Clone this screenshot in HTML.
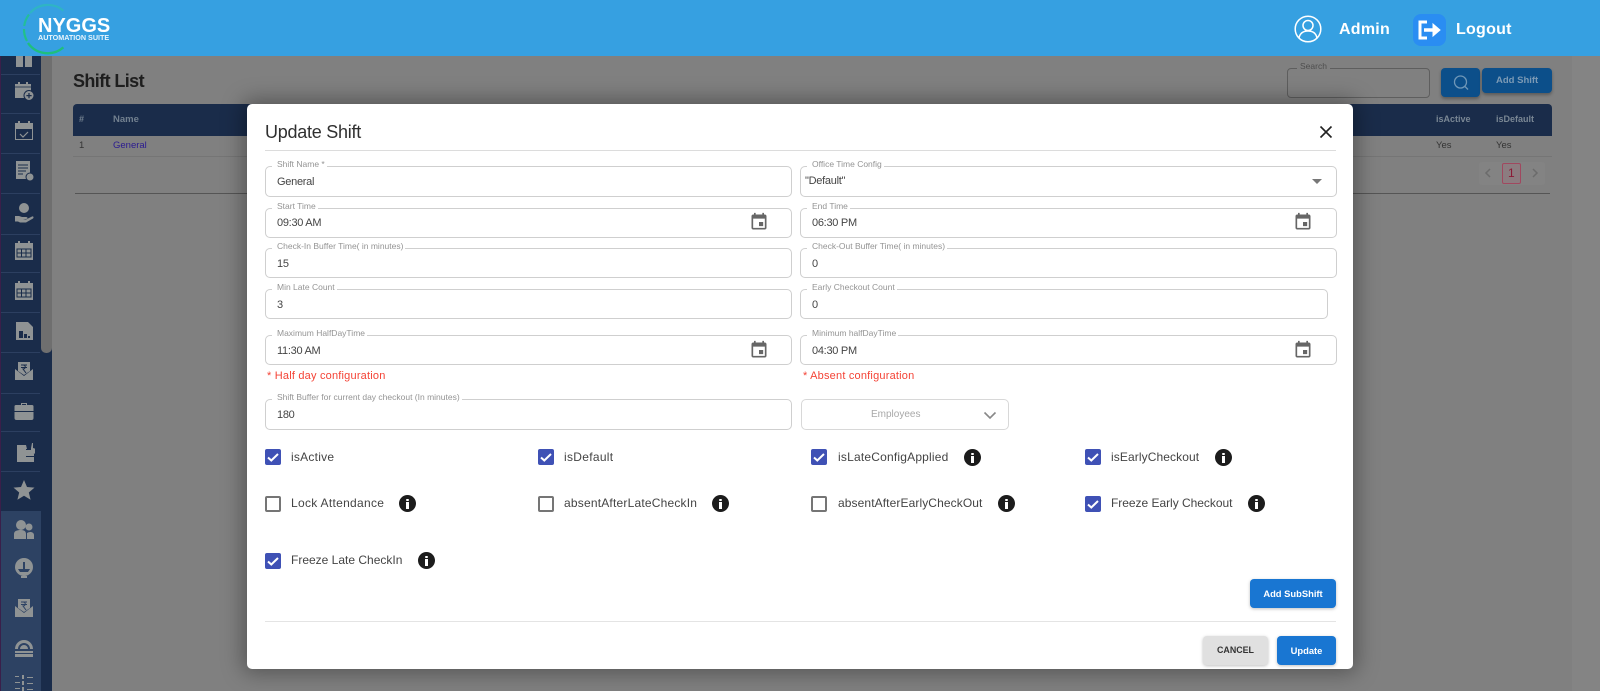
<!DOCTYPE html>
<html><head><meta charset="utf-8"><style>
*{box-sizing:border-box}
html,body{margin:0;padding:0;width:1600px;height:691px;overflow:hidden;background:#808080;font-family:"Liberation Sans",sans-serif}
body{filter:blur(.35px)}
.a{position:absolute}
.t{position:absolute;white-space:nowrap;line-height:1}
.hdr{left:0;top:0;width:1600px;height:56px;background:#36a0e1;z-index:5}
.sb{left:0;top:56px;width:52px;height:635px;background:#1a2c4a}
.sb2{left:1px;top:511px;width:40px;height:180px;background:#2d4263}
.sbs{left:41px;top:56px;width:11px;height:297px;background:#6f6f6f;border-radius:0 0 5px 5px}
.sep{left:1px;width:39px;height:1px;background:#2c3f60}
.ic{position:absolute;left:13px;width:22px;height:22px;fill:#8f9394}
.modal{left:247px;top:104px;width:1106px;height:565px;background:#fff;border-radius:5px;box-shadow:0 0 22px 4px rgba(0,0,0,.35);z-index:3}
.f{position:absolute;border:1px solid #cfcfcf;border-radius:5px;background:#fff;z-index:4}
.l{position:absolute;left:6px;top:-7px;background:#fff;padding:0 2px 0 5px;font-size:8.5px;line-height:9px;color:#949494;white-space:nowrap}
.v{position:absolute;left:11px;font-size:11px;letter-spacing:-.28px;line-height:12px;color:#444;white-space:nowrap}
.cal{position:absolute;width:20px;height:20px;fill:#666;z-index:5}
.cb{position:absolute;width:16px;height:16px;border-radius:2px;z-index:4}
.on{background:#3f51b5}
.off{border:2px solid #757575;background:#fff}
.cb svg{position:absolute;left:0;top:0;width:16px;height:16px}
.lb{position:absolute;font-size:12px;line-height:14px;color:#444;white-space:nowrap;z-index:4}
.i{position:absolute;width:17px;height:17px;border-radius:50%;background:#1c1c1c;z-index:4;color:#fff}
.i:before{content:"";position:absolute;left:7.4px;top:3.5px;width:2.2px;height:2.2px;background:#fff;border-radius:50%}
.i:after{content:"";position:absolute;left:7.4px;top:7px;width:2.2px;height:6.5px;background:#fff}
.btn{position:absolute;border-radius:4px;background:#1976d2;color:#fff;font-size:9.4px;font-weight:bold;text-align:center;box-shadow:0 1px 3px rgba(0,0,0,.25);z-index:4}
.red{position:absolute;font-size:11px;line-height:12px;color:#f44336;z-index:4;white-space:nowrap;letter-spacing:.2px}
</style></head><body>

<!-- underlying page -->
<div class="a" style="left:52px;top:56px;width:1520px;height:156px;background:#808080"></div>
<div class="a" style="left:1572px;top:56px;width:28px;height:635px;background:#848484"></div>
<div class="t" style="left:73px;top:72px;font-size:18px;font-weight:bold;color:#1e1e1e;letter-spacing:-.6px">Shift List</div>
<div class="a" style="left:73px;top:104px;width:1479px;height:32px;background:#1a2c4a;border-radius:4px 4px 0 0"></div>
<div class="t" style="left:79px;top:115px;font-size:9px;font-weight:bold;color:#72808f">#</div>
<div class="t" style="left:113px;top:115px;font-size:9.5px;font-weight:bold;color:#72808f">Name</div>
<div class="t" style="left:1436px;top:115px;font-size:9px;font-weight:bold;color:#7a8794">isActive</div>
<div class="t" style="left:1496px;top:115px;font-size:9px;font-weight:bold;color:#7a8794">isDefault</div>
<div class="t" style="left:79px;top:141px;font-size:9.5px;color:#333">1</div>
<div class="t" style="left:113px;top:141px;font-size:9.5px;color:#2a1a90">General</div>
<div class="t" style="left:1436px;top:141px;font-size:9.5px;color:#333">Yes</div>
<div class="t" style="left:1496px;top:141px;font-size:9.5px;color:#333">Yes</div>
<div class="a" style="left:73px;top:156px;width:1479px;height:1px;background:#757575"></div>
<div class="a" style="left:75px;top:193px;width:1475px;height:1px;background:#555"></div>
<div class="a" style="left:1287px;top:68px;width:143px;height:30px;border:1px solid #5e5e5e;border-radius:4px"></div>
<div class="t" style="left:1297px;top:62px;font-size:8.5px;padding:0 3px;background:#808080;color:#4e4e4e">Search</div>
<div class="a" style="left:1441px;top:68px;width:39px;height:29px;background:#0c4f8a;border-radius:4px;box-shadow:0 2px 3px rgba(0,0,0,.3)">
<svg width="39" height="29" viewBox="0 0 39 29" style="position:absolute;left:0;top:0" fill="none" stroke="#6f97b8" stroke-width="1.3"><circle cx="19.500" cy="14" r="6"/><path d="M24 18.500l3 3"/></svg></div>
<div class="a" style="left:1482px;top:68px;width:70px;height:25px;background:#0c4f8a;border-radius:4px;box-shadow:0 2px 3px rgba(0,0,0,.3)"></div>
<div class="t" style="left:1496px;top:76px;font-size:9.5px;font-weight:bold;color:#7c9ab5">Add Shift</div>
<div class="a" style="left:1479px;top:162px;width:66px;height:23px;background:#838383;border-radius:3px"></div>
<div class="a" style="left:1502px;top:163px;width:19px;height:21px;border:1px solid #a0485f;border-radius:2px;background:#8c7c80"></div>
<div class="t" style="left:1508px;top:167px;font-size:12px;color:#8b1a35">1</div>
<svg class="a" style="left:1482px;top:165px" width="60" height="16" viewBox="0 0 60 16" fill="none" stroke="#6b6b6b" stroke-width="1.500"><path d="M8 4l-4 4 4 4M51 4l4 4-4 4"/></svg>

<!-- sidebar -->
<div class="a sb"></div>
<div class="a sb2"></div>
<div class="a sbs"></div>
<div class="a" style="left:0;top:56px;width:1px;height:635px;background:#3a1f4a"></div>
<div class="a sep" style="top:74px"></div><div class="a sep" style="top:113px"></div><div class="a sep" style="top:153px"></div><div class="a sep" style="top:193px"></div><div class="a sep" style="top:234px"></div><div class="a sep" style="top:272px"></div><div class="a sep" style="top:312px"></div><div class="a sep" style="top:352px"></div><div class="a sep" style="top:393px"></div><div class="a sep" style="top:431px"></div><div class="a sep" style="top:471px"></div>

<svg class="ic" style="top:50px" viewBox="0 0 22 22"><path d="M3 6h7v11H3zM12 6h7v11h-7z"/></svg>
<svg class="ic" style="top:80px" viewBox="0 0 22 22"><path d="M2 4h3V2h2v2h6V2h2v2h3v14H2z"/><path d="M2 7h16" stroke="#1a2c4a" stroke-width=".8"/><circle cx="16" cy="15.500" r="5" stroke="#1a2c4a"/><path d="M15.400 13h1.200v2h2v1.200h-2v2h-1.200v-2h-2V15h2z" fill="#1a2c4a"/></svg>
<svg class="ic" style="top:120px" viewBox="0 0 22 22"><path d="M2 3h3V1h2v2h8V1h2v2h3v5H2z"/><path d="M2.500 8.500h17v11h-17z" fill="none" stroke="#8f9394"/><path d="M7 14l3 3 5-5" fill="none" stroke="#8f9394" stroke-width="1.200"/></svg>
<svg class="ic" style="top:160px" viewBox="0 0 22 22"><path d="M3 1h14v18H3z"/><path d="M5 5h10M5 8h10M5 11h8M5 14h5" stroke="#1a2c4a"/><circle cx="17" cy="17" r="4" stroke="#1a2c4a"/></svg>
<svg class="ic" style="top:202px" viewBox="0 0 22 22"><circle cx="11" cy="6" r="5"/><path d="M2 14h4l3 1h4c2 0 2 2 0 2h-3l3 .5 6-3c1.500-.5 2 1 1 2l-7 4H7l-2-1H2z"/></svg>
<svg class="ic" style="top:240px" viewBox="0 0 22 22"><path d="M2 3h3V1h2v2h8V1h2v2h3v17H2z"/><path d="M4 9h14v8H4zM8.500 9v8M13 9v8M4 13h14" fill="none" stroke="#1a2c4a" stroke-width="1"/></svg>
<svg class="ic" style="top:280px" viewBox="0 0 22 22"><path d="M2 3h3V1h2v2h8V1h2v2h3v17H2z"/><path d="M4 9h14v8H4zM8.500 9v8M13 9v8M4 13h14" fill="none" stroke="#1a2c4a" stroke-width="1"/></svg>
<svg class="ic" style="top:320px" viewBox="0 0 22 22"><path d="M3 2h12l5 5v13H3z"/><path d="M6 11h4v7H6zM11 14h3v4h-3zM15 16h2v2h-2z" fill="#1a2c4a"/></svg>
<svg class="ic" style="top:360px" viewBox="0 0 22 22"><path d="M5 2h12v9l-6 4-6-4zM2 9l9 7 9-7v11H2z"/><path d="M8 5h6M8 7.500h6M10 5c3 0 3 4 0 4l3 4" fill="none" stroke="#1a2c4a"/></svg>
<svg class="ic" style="top:400px" viewBox="0 0 22 22"><path d="M8 3h6v2h5a1.500 1.500 0 0 1 1.500 1.500V11H1.500V6.500A1.500 1.500 0 0 1 3 5h5zm1 1v1h4V4zM1.500 12H20.500v6a2 2 0 0 1-2 2h-15a2 2 0 0 1-2-2z"/></svg>
<svg class="ic" style="top:441px" viewBox="0 0 22 22"><path d="M4 4h9l1 4h-1v1h5v-2l1-5h1v5a3 3 0 0 1 0 6H13v8H4z"/><path d="M9 13h12v2H9zM9 16h12v5H9z"/></svg>
<svg class="ic" style="top:479px" viewBox="0 0 22 22"><path d="M11 1l3 7 7.500.6-5.700 4.900 1.800 7.300L11 16.800 4.400 20.800l1.800-7.300L.5 8.600 8 8z"/></svg>
<svg class="ic" style="top:519px" viewBox="0 0 22 22"><circle cx="8" cy="6" r="5"/><circle cx="16" cy="8" r="3.500"/><path d="M1 20v-5c0-3 3-4 7-4s5 2 5 4v5zM14 20v-6c3-2 7-1 7 2v4z"/></svg>
<svg class="ic" style="top:557px" viewBox="0 0 22 22"><circle cx="11" cy="10" r="9"/><path d="M5 12h12l-2 3H7zM10 5h2v7h-2z" fill="#2d4263"/><path d="M8 19h6v2H8z"/></svg>
<svg class="ic" style="top:597px" viewBox="0 0 22 22"><path d="M5 2h12v9l-6 4-6-4zM2 9l9 7 9-7v11H2z"/><path d="M8 5h6M8 7.500h6M10 5c3 0 3 4 0 4l3 4" fill="none" stroke="#2d4263"/></svg>
<svg class="ic" style="top:636px" viewBox="0 0 22 22"><path d="M2 13a9 9 0 0 1 18 0h-3a6 6 0 0 0-12 0zM7 13a4 4 0 0 1 8 0zM2 15h18v2H2zM2 18h18v3H2z"/></svg>
<svg class="ic" style="top:674px" viewBox="0 0 22 22"><path d="M2 2h4v1H2zM9 1h2v4H9zM14 3h6v1h-6zM2 8h5v1H2zM9 7h2v4H9zM14 9h6v1h-6zM2 14h5v1H2zM9 13h2v4H9zM14 15h6v1h-6z"/></svg>

<!-- header -->
<div class="a hdr">
<svg class="a" style="left:0;top:0" width="80" height="56" viewBox="0 0 80 56" fill="none"><path d="M63.400 10.600A24 24 0 0 0 30 13" stroke="#2fb4c4" stroke-width="2.200"/><path d="M29 14.500A24 24 0 0 0 24.200 26" stroke="#24bd9a" stroke-width="2.200"/><path d="M24 29A24 24 0 0 0 27 41" stroke="#21c08a" stroke-width="2.200"/><path d="M28 43A24 24 0 0 0 63.400 47.400" stroke="#1fbf7c" stroke-width="2.400"/></svg>
<div class="t" style="left:38px;top:16px;font-size:20px;font-weight:bold;color:#fff">NYGGS</div>
<div class="t" style="left:38px;top:34px;font-size:7.200px;font-weight:bold;color:#e8f4fc">AUTOMATION SUITE</div>
<svg class="a" style="left:1294px;top:15px" width="28" height="28" viewBox="0 0 28 28" fill="none" stroke="#fff" stroke-width="1.500"><circle cx="14" cy="14" r="12.800"/><circle cx="14" cy="10.500" r="5"/><path d="M5 23c1-5 4-7 9-7s8 2 9 7"/></svg>
<div class="t" style="left:1339px;top:22px;font-size:16px;font-weight:bold;color:#fff;letter-spacing:.25px">Admin</div>
<div class="a" style="left:1413px;top:14px;width:33px;height:32px;background:#2a8df2;border-radius:8px"></div>
<svg class="a" style="left:1413px;top:14px" width="33" height="32" viewBox="0 0 33 32" fill="none" stroke="#fff"><path d="M14 8H7v16h7" stroke-width="3"/><path d="M11 16h12" stroke-width="3.500"/><path d="M20 10l7 6-7 6z" fill="#fff" stroke-width="1"/></svg>
<div class="t" style="left:1456px;top:22px;font-size:16px;font-weight:bold;color:#fff;letter-spacing:.25px">Logout</div>
</div>

<!-- modal -->
<div class="a modal"></div>
<div class="t" style="left:265px;top:123px;font-size:18px;color:#303030;z-index:4;letter-spacing:-.25px">Update Shift</div>
<svg class="a" style="left:1319px;top:125px;z-index:4" width="14" height="14" viewBox="0 0 14 14" stroke="#222" stroke-width="1.600"><path d="M1.500 1.500l11 11M12.500 1.500l-11 11"/></svg>
<div class="a" style="left:265px;top:150px;width:1071px;height:1px;background:#dcdcdc;z-index:4"></div>

<div class="f" style="left:265px;top:166px;width:527px;height:31px"><span class="l">Shift Name *</span><span class="v" style="top:9px">General</span></div>
<div class="f" style="left:800px;top:166px;width:537px;height:31px"><span class="l">Office Time Config</span><span class="v" style="left:4px;top:8px">"Default"</span><svg class="a" style="left:511px;top:12px" width="10" height="5" viewBox="0 0 10 5"><path d="M0 0h10L5 5z" fill="#777"/></svg></div>

<div class="f" style="left:265px;top:208px;width:527px;height:30px"><span class="l">Start Time</span><span class="v" style="top:8px">09:30 AM</span></div>
<svg class="cal" style="left:749px;top:212px" viewBox="0 0 24 24"><path d="M17 12h-5v5h5v-5zM16 1v2H8V1H6v2H5c-1.110 0-1.990.9-1.990 2L3 19c0 1.100.89 2 2 2h14c1.100 0 2-.9 2-2V5c0-1.100-.9-2-2-2h-1V1h-2zm3 18H5V8h14v11z"/></svg>
<div class="f" style="left:800px;top:208px;width:537px;height:30px"><span class="l">End Time</span><span class="v" style="top:8px">06:30 PM</span></div>
<svg class="cal" style="left:1293px;top:212px" viewBox="0 0 24 24"><path d="M17 12h-5v5h5v-5zM16 1v2H8V1H6v2H5c-1.110 0-1.990.9-1.990 2L3 19c0 1.100.89 2 2 2h14c1.100 0 2-.9 2-2V5c0-1.100-.9-2-2-2h-1V1h-2zm3 18H5V8h14v11z"/></svg>

<div class="f" style="left:265px;top:248px;width:527px;height:30px"><span class="l">Check-In Buffer Time( in minutes)</span><span class="v" style="top:9px">15</span></div>
<div class="f" style="left:800px;top:248px;width:537px;height:30px"><span class="l">Check-Out Buffer Time( in minutes)</span><span class="v" style="top:9px">0</span></div>

<div class="f" style="left:265px;top:289px;width:527px;height:30px"><span class="l">Min Late Count</span><span class="v" style="top:9px">3</span></div>
<div class="f" style="left:800px;top:289px;width:528px;height:30px"><span class="l">Early Checkout Count</span><span class="v" style="top:9px">0</span></div>

<div class="f" style="left:265px;top:335px;width:527px;height:30px"><span class="l">Maximum HalfDayTime</span><span class="v" style="top:9px">11:30 AM</span></div>
<svg class="cal" style="left:749px;top:340px" viewBox="0 0 24 24"><path d="M17 12h-5v5h5v-5zM16 1v2H8V1H6v2H5c-1.110 0-1.990.9-1.990 2L3 19c0 1.100.89 2 2 2h14c1.100 0 2-.9 2-2V5c0-1.100-.9-2-2-2h-1V1h-2zm3 18H5V8h14v11z"/></svg>
<div class="f" style="left:800px;top:335px;width:537px;height:30px"><span class="l">Minimum halfDayTime</span><span class="v" style="top:9px">04:30 PM</span></div>
<svg class="cal" style="left:1293px;top:340px" viewBox="0 0 24 24"><path d="M17 12h-5v5h5v-5zM16 1v2H8V1H6v2H5c-1.110 0-1.990.9-1.990 2L3 19c0 1.100.89 2 2 2h14c1.100 0 2-.9 2-2V5c0-1.100-.9-2-2-2h-1V1h-2zm3 18H5V8h14v11z"/></svg>

<div class="red" style="left:267px;top:370px">* Half day configuration</div>
<div class="red" style="left:803px;top:370px">* Absent configuration</div>

<div class="f" style="left:265px;top:399px;width:527px;height:31px"><span class="l">Shift Buffer for current day checkout (In minutes)</span><span class="v" style="top:9px">180</span></div>
<div class="f" style="left:801px;top:399px;width:208px;height:31px;border-color:#d8d8d8"><span class="t" style="left:69px;top:10px;font-size:10px;color:#a8a8a8">Employees</span><svg class="a" style="left:181px;top:11px" width="14" height="9" viewBox="0 0 14 9" fill="none" stroke="#888" stroke-width="1.600"><path d="M1.500 1.500l5.500 5.500 5.500-5.500"/></svg></div>

<div class="cb on" style="left:265px;top:449px"><svg viewBox="0 0 16 16" fill="none" stroke="#fff" stroke-width="2"><path d="M3 8.500l3.300 3 6.700-6.500"/></svg></div><div class="lb" style="left:291px;top:450px;letter-spacing:.25px">isActive</div>
<div class="cb on" style="left:538px;top:449px"><svg viewBox="0 0 16 16" fill="none" stroke="#fff" stroke-width="2"><path d="M3 8.500l3.300 3 6.700-6.500"/></svg></div><div class="lb" style="left:564px;top:450px;letter-spacing:.3px">isDefault</div>
<div class="cb on" style="left:811px;top:449px"><svg viewBox="0 0 16 16" fill="none" stroke="#fff" stroke-width="2"><path d="M3 8.500l3.300 3 6.700-6.500"/></svg></div><div class="lb" style="left:838px;top:450px;letter-spacing:.2px">isLateConfigApplied</div><div class="i" style="left:964px;top:449px"></div>
<div class="cb on" style="left:1085px;top:449px"><svg viewBox="0 0 16 16" fill="none" stroke="#fff" stroke-width="2"><path d="M3 8.500l3.300 3 6.700-6.500"/></svg></div><div class="lb" style="left:1111px;top:450px;letter-spacing:.1px">isEarlyCheckout</div><div class="i" style="left:1215px;top:449px"></div>

<div class="cb off" style="left:265px;top:496px"></div><div class="lb" style="left:291px;top:496px;letter-spacing:.3px">Lock Attendance</div><div class="i" style="left:399px;top:495px"></div>
<div class="cb off" style="left:538px;top:496px"></div><div class="lb" style="left:564px;top:496px;letter-spacing:.2px">absentAfterLateCheckIn</div><div class="i" style="left:712px;top:495px"></div>
<div class="cb off" style="left:811px;top:496px"></div><div class="lb" style="left:838px;top:496px;letter-spacing:.1px">absentAfterEarlyCheckOut</div><div class="i" style="left:998px;top:495px"></div>
<div class="cb on" style="left:1085px;top:496px"><svg viewBox="0 0 16 16" fill="none" stroke="#fff" stroke-width="2"><path d="M3 8.500l3.300 3 6.700-6.500"/></svg></div><div class="lb" style="left:1111px;top:496px;letter-spacing:-.03px">Freeze Early Checkout</div><div class="i" style="left:1248px;top:495px"></div>

<div class="cb on" style="left:265px;top:553px"><svg viewBox="0 0 16 16" fill="none" stroke="#fff" stroke-width="2"><path d="M3 8.500l3.300 3 6.700-6.500"/></svg></div><div class="lb" style="left:291px;top:553px">Freeze Late CheckIn</div><div class="i" style="left:418px;top:552px"></div>

<div class="btn" style="left:1250px;top:579px;width:86px;height:29px;line-height:29px">Add SubShift</div>
<div class="a" style="left:265px;top:621px;width:1071px;height:1px;background:#e4e4e4;z-index:4"></div>
<div class="btn" style="left:1203px;top:636px;width:65px;height:29px;line-height:29px;background:#e0e0e0;color:#333;font-size:8.900px">CANCEL</div>
<div class="btn" style="left:1277px;top:636px;width:59px;height:29px;line-height:29px">Update</div>
</body></html>
